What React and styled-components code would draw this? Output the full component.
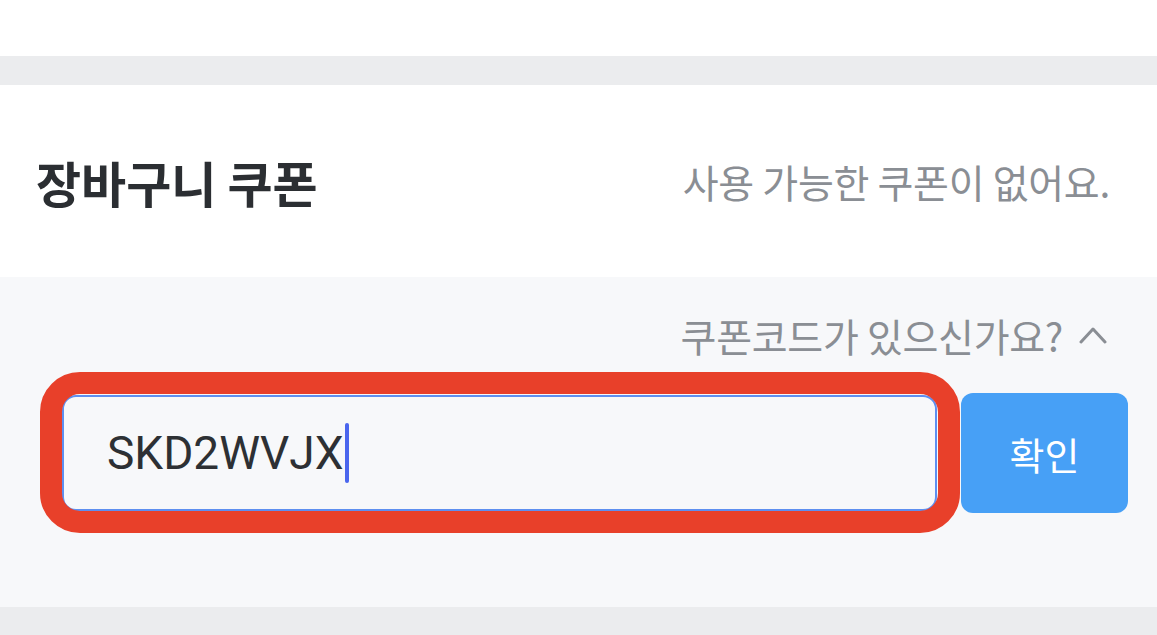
import styled, { createGlobalStyle } from 'styled-components'

const GlobalStyle = createGlobalStyle`
  html, body {
    margin: 0;
    padding: 0;
    background: #ffffff;
  }
  body {
    font-family: "Noto Sans CJK KR", "Noto Sans", sans-serif;
    -webkit-font-smoothing: antialiased;
  }
`;

const Page = styled.div`
  width: 1157px;
  height: 635px;
  overflow: hidden;
  display: flex;
  flex-direction: column;
`;

const Block = styled.div`
  height: ${p => p.h}px;
  flex: none;
  background: ${p => p.bg};
`;

const Header = styled.section`
  height: 192px;
  display: flex;
  align-items: center;
  justify-content: space-between;
  padding: 0 47px 0 36px;
  background: #ffffff;
`;

const Title = styled.h2`
  margin: 0;
  font-size: 49px;
  font-weight: 700;
  color: #2b2e32;
`;

const Hint = styled.span`
  font-size: 39px;
  color: #8a8e94;
  letter-spacing: -0.3px;
`;

const CodeSection = styled.section`
  height: 330px;
  background: #f7f8fa;
  padding-top: 31px;
  box-sizing: border-box;
  display: flex;
  flex-direction: column;
  gap: 31px;
`;

const Toggle = styled.button`
  align-self: flex-end;
  margin-right: 50px;
  height: 54px;
  display: flex;
  align-items: center;
  gap: 16px;
  background: none;
  border: none;
  padding: 0;
  font-family: inherit;
  font-size: 39px;
  color: #8a8e94;
  letter-spacing: -0.3px;
`;

const InputRow = styled.div`
  display: flex;
  align-items: center;
  gap: 24px;
  padding: 0 29px 0 62px;
`;

const FieldWrap = styled.div`
  position: relative;
  flex: 1;

  &::after {
    content: '';
    position: absolute;
    inset: -23px -23px -22px -22px;
    border: 22px solid #e8402a;
    border-radius: 40px;
    pointer-events: none;
  }
`;

const Field = styled.div`
  height: 116px;
  box-sizing: border-box;
  border: 2px solid #5e8ff0;
  border-radius: 14px;
  background: #f7f8fa;
  display: flex;
  align-items: center;
  padding-left: 43px;
  font-family: Roboto, "Noto Sans CJK KR", sans-serif;
  font-size: 46px;
  color: #2d3034;
`;

const Caret = styled.span`
  display: inline-block;
  width: 4px;
  height: 60px;
  margin-left: 1px;
  border-radius: 2px;
  background: #4a66ee;
`;

const Confirm = styled.button`
  width: 167px;
  height: 120px;
  border: none;
  border-radius: 12px;
  background: #47a0f6;
  color: #ffffff;
  font-family: inherit;
  font-size: 38px;
  flex: none;
`;

function ChevronUp() {
  return (
    <svg width="28" height="18" viewBox="0 0 28 18" fill="none">
      <path d="M2 16 L14 3 L26 16" stroke="#8a8e94" strokeWidth="3" strokeLinecap="round" strokeLinejoin="round" />
    </svg>
  );
}

export default function App() {
  return (
    <Page>
      <GlobalStyle />
      <Block h={56} bg="#ffffff" />
      <Block h={29} bg="#ebecee" />
      <Header>
        <Title>장바구니 쿠폰</Title>
        <Hint>사용 가능한 쿠폰이 없어요.</Hint>
      </Header>
      <CodeSection>
        <Toggle>
          쿠폰코드가 있으신가요?
          <ChevronUp />
        </Toggle>
        <InputRow>
          <FieldWrap>
            <Field role="textbox">
              SKD2WVJX<Caret />
            </Field>
          </FieldWrap>
          <Confirm>확인</Confirm>
        </InputRow>
      </CodeSection>
      <Block h={28} bg="#ebecee" />
    </Page>
  );
}
